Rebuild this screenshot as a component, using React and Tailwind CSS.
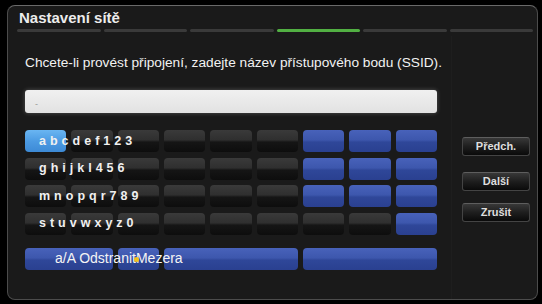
import React from 'react';

const rows = ['abcdef123', 'ghijkl456', 'mnopqr789', 'stuvwxyz0'];

// which keys are blue per row (index)
const blueKeys = [
  [6, 7, 8],
  [6, 7, 8],
  [6, 7, 8],
  [8],
];

const darkKey =
  'bg-[linear-gradient(to_bottom,#3a3a3a_0%,#2f2f2f_45%,#151515_55%,#0d0d0d_100%)]';
const blueKey =
  'bg-[linear-gradient(to_bottom,#4862ba_0%,#3d57ad_45%,#2f4799_55%,#2a4090_100%)]';

function Key({ kind }) {
  let cls = darkKey;
  if (kind === 'blue') cls = blueKey;
  if (kind === 'active')
    cls = 'bg-[linear-gradient(to_bottom,#6ab6f2_0%,#4c9be3_50%,#3d8ad6_100%)]';
  return <div className={`h-[22px] rounded-[4px] ${cls}`} />;
}

function SideButton({ label, className }) {
  return (
    <div
      className={`h-[19px] w-[68px] rounded-[3px] border border-[#444] border-t-[#5e5e5e] bg-[linear-gradient(to_bottom,#383838_0%,#1e1e1e_50%,#0a0a0a_100%)] flex items-center justify-center text-[11px] font-bold text-[#dedede] ${className}`}
    >
      {label}
    </div>
  );
}

export default function App() {
  return (
    <div
      className="w-[542px] h-[304px] bg-black pt-[5px] pl-[7px] pr-[4px] pb-[4px]"
      style={{ fontFamily: '"Liberation Sans", Arial, sans-serif' }}
    >
      <div className="relative h-full rounded-[8px] border border-[#4c4c4c] border-t-[#6a6a6a] bg-[#1a1a1a] flex flex-col overflow-hidden">
        {/* faint divider of the side area */}
        <div className="absolute top-[30px] bottom-0 left-[443px] w-px bg-[#1e1e1e]" />

        {/* title */}
        <div className="pl-[11px] pt-[3px] text-[15px] leading-[18px] font-bold text-[#ececec]">
          Nastavení sítě
        </div>

        {/* progress */}
        <div className="mt-[2px] ml-[9px] mr-[4px] flex gap-[3px] h-[3px]">
          {[0, 1, 2, 3, 4, 5].map((i) => (
            <div
              key={i}
              className={`flex-1 rounded-full ${i === 3 ? 'bg-[#52b043]' : 'bg-[#3a3a3a]'}`}
            />
          ))}
        </div>

        {/* instruction */}
        <p className="mt-[23px] ml-[17px] text-[13.7px] leading-[16px] text-[#f2f2f2] whitespace-nowrap">
          Chcete-li provést připojení, zadejte název přístupového bodu (SSID).
        </p>

        <div className="mt-[19px] ml-[17px] flex">
          {/* left column */}
          <div className="w-[412px]">
            <div className="h-[23px] rounded-[3px] bg-[linear-gradient(to_bottom,#f0f0f0,#e2e2e2)] shadow-[0_0_4px_rgba(255,255,255,0.25)] pl-[10px] flex items-center">
              <span className="text-[9px] text-[#9a9a9a] mt-[6px]">-</span>
            </div>

            <div className="mt-[17px] flex flex-col gap-[5.5px]">
              {rows.map((chars, r) => (
                <div key={r} className="relative grid grid-cols-9 gap-x-[5px]">
                  {Array.from({ length: 9 }).map((_, c) => (
                    <Key
                      key={c}
                      kind={
                        r === 0 && c === 0
                          ? 'active'
                          : blueKeys[r].includes(c)
                          ? 'blue'
                          : 'dark'
                      }
                    />
                  ))}
                  <div className="absolute left-[14px] top-0 h-[22px] flex items-center text-[12.5px] font-bold tracking-[4px] text-[#f0f0f0]">
                    {chars}
                  </div>
                </div>
              ))}
            </div>

            <div className="relative mt-[13px] grid grid-cols-9 gap-x-[5px]">
              <div className={`col-span-2 h-[22px] rounded-[4px] ${blueKey}`} />
              <div className={`col-span-1 h-[22px] rounded-[4px] ${blueKey}`} />
              <div className={`col-span-3 h-[22px] rounded-[4px] ${blueKey}`} />
              <div className={`col-span-3 h-[22px] rounded-[4px] ${blueKey}`} />
              <div className="absolute left-[30px] top-0 h-[22px] flex items-center text-[14px] text-[#f4f4f4]">
                <span>a/A Odstranit</span>
                <span className="relative">
                  Mezera
                  <span className="absolute left-[-2px] top-[9px] w-[5px] h-[5px] rounded-full bg-[#f2c21b]" />
                </span>
              </div>
            </div>
          </div>

          {/* right column */}
          <div className="ml-[25px] flex flex-col">
            <SideButton label="Předch." className="mt-[47px]" />
            <SideButton label="Další" className="mt-[16px]" />
            <SideButton label="Zrušit" className="mt-[12px]" />
          </div>
        </div>
      </div>
    </div>
  );
}
